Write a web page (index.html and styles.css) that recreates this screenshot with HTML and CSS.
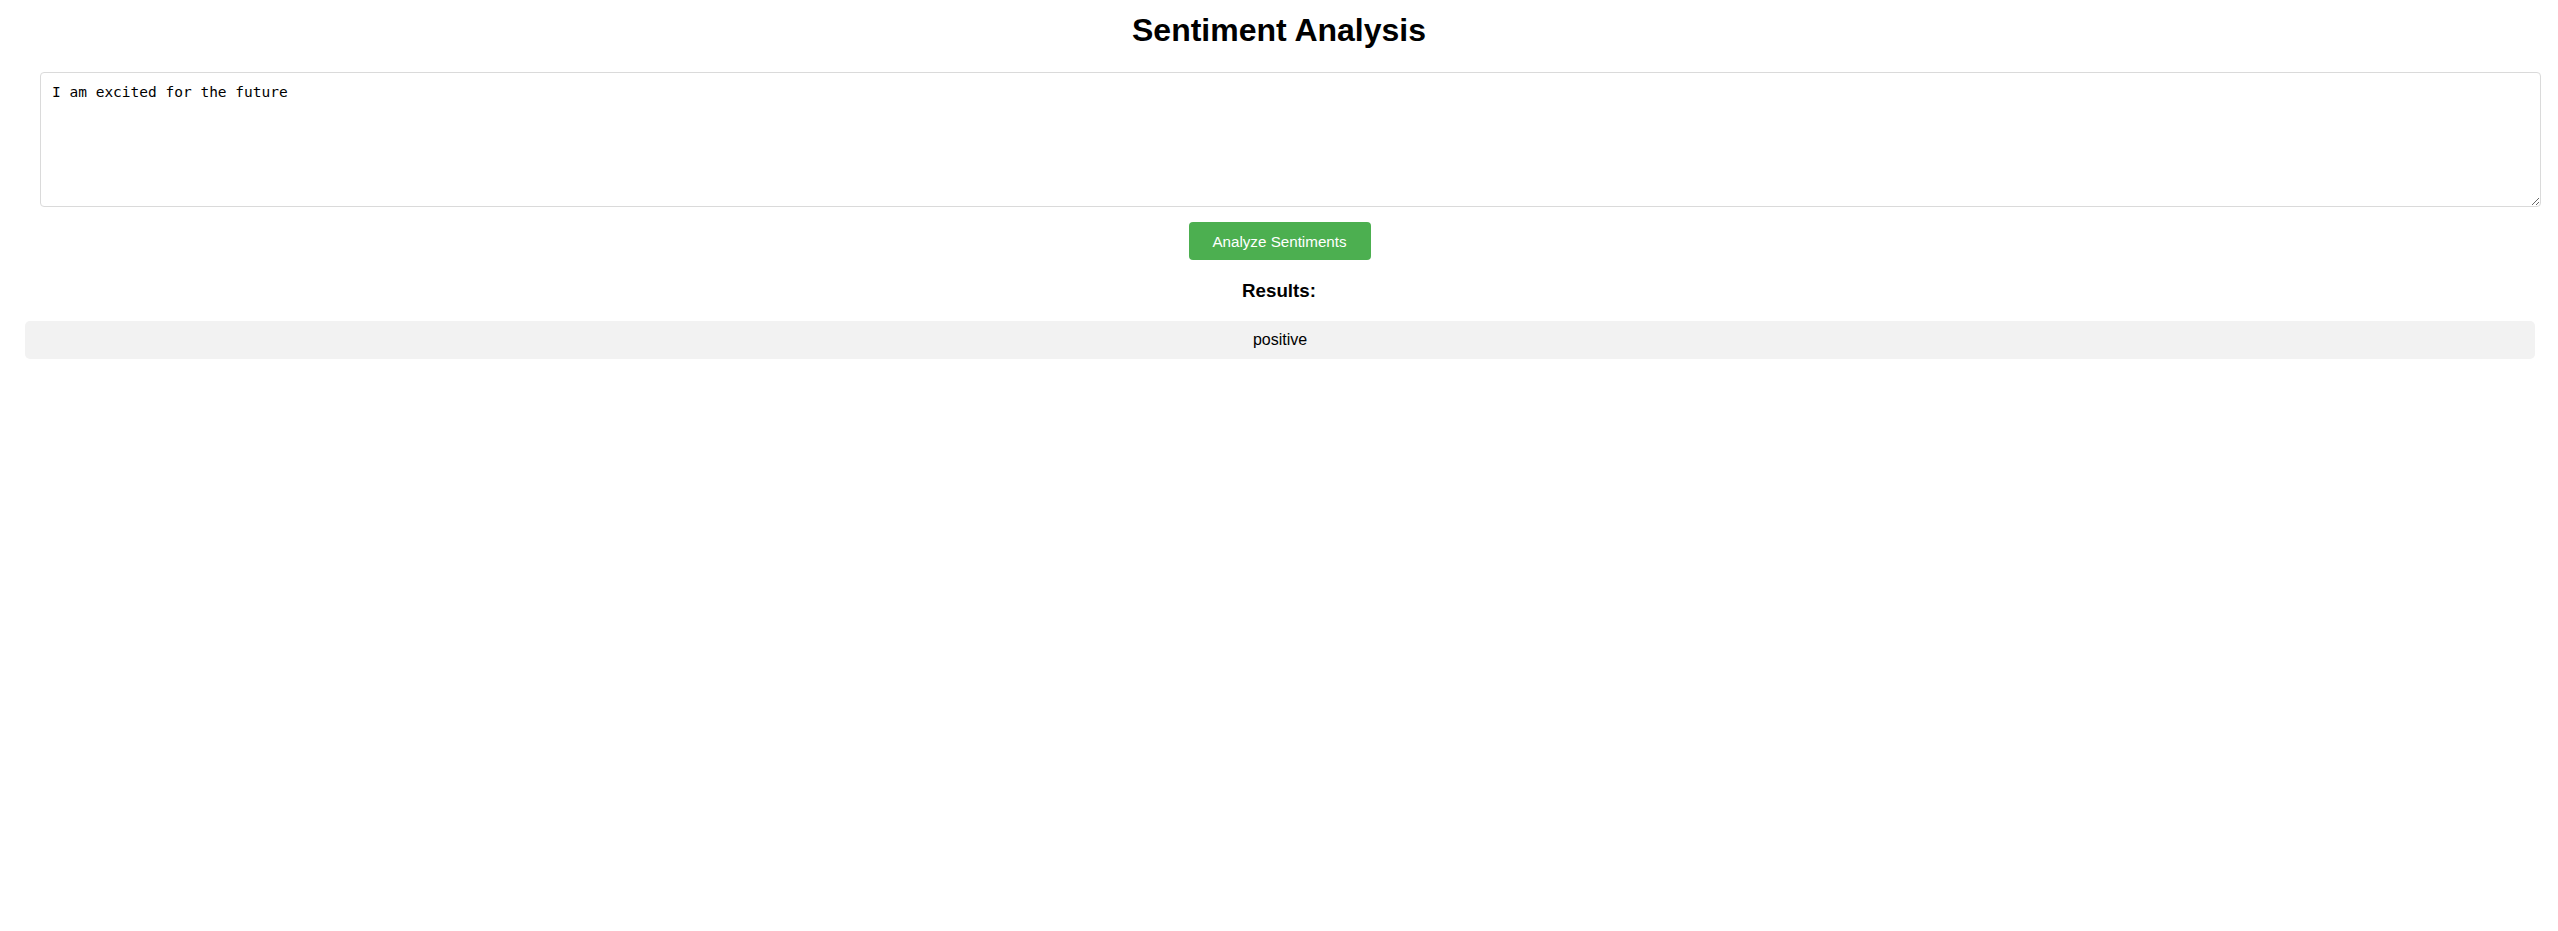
FILE: index.html
```html
<!DOCTYPE html>
<html lang="en">
<head>
<meta charset="utf-8">
<title>Sentiment Analysis</title>
<link rel="stylesheet" href="styles.css">
</head>
<body>
<h1 class="title">Sentiment Analysis</h1>
<div class="form">
  <textarea class="input" spellcheck="false">I am excited for the future</textarea>
</div>
<div class="actions">
  <button class="analyze">Analyze Sentiments</button>
</div>
<h3 class="results-title">Results:</h3>
<div class="results">
  <div class="result">positive</div>
</div>
</body>
</html>
```
FILE: styles.css
```css
html, body {
  background: #ffffff;
}
body {
  margin: 0;
  padding: 12px 0 0;
  font-family: "Liberation Sans", Arial, sans-serif;
  color: #000;
}
.title {
  margin: 0;
  font-size: 32px;
  font-weight: bold;
  text-align: center;
  line-height: 36px;
}
.form {
  padding: 24px 17px 0 40px;
}
.input {
  display: block;
  box-sizing: border-box;
  width: 100%;
  height: 135px;
  margin: 0;
  padding: 11px 10px 10px 11px;
  border: 1px solid #dadada;
  border-radius: 4px;
  font-family: "DejaVu Sans Mono", "Liberation Mono", monospace;
  font-size: 14.5px;
  line-height: 17px;
  color: #000;
  background: #fff;
  outline: none;
}
.actions {
  display: flex;
  justify-content: center;
  padding-top: 15px;
}
.analyze {
  box-sizing: border-box;
  height: 38px;
  width: 182px;
  padding: 0 10px;
  border: none;
  border-radius: 4px;
  background: #4caf50;
  color: #fff;
  font-family: "Liberation Sans", Arial, sans-serif;
  font-size: 15.2px;
  cursor: pointer;
  margin-left: 1px;
}
.results-title {
  margin: 20px 0 0;
  font-size: 18.72px;
  font-weight: bold;
  text-align: center;
  line-height: 21px;
}
.results {
  padding: 20px 23px 0 25px;
}
.result {
  height: 38px;
  box-sizing: border-box;
  padding: 10px;
  background: #f2f2f2;
  border-radius: 5px;
  text-align: center;
  font-size: 16px;
  line-height: 18px;
}
```
